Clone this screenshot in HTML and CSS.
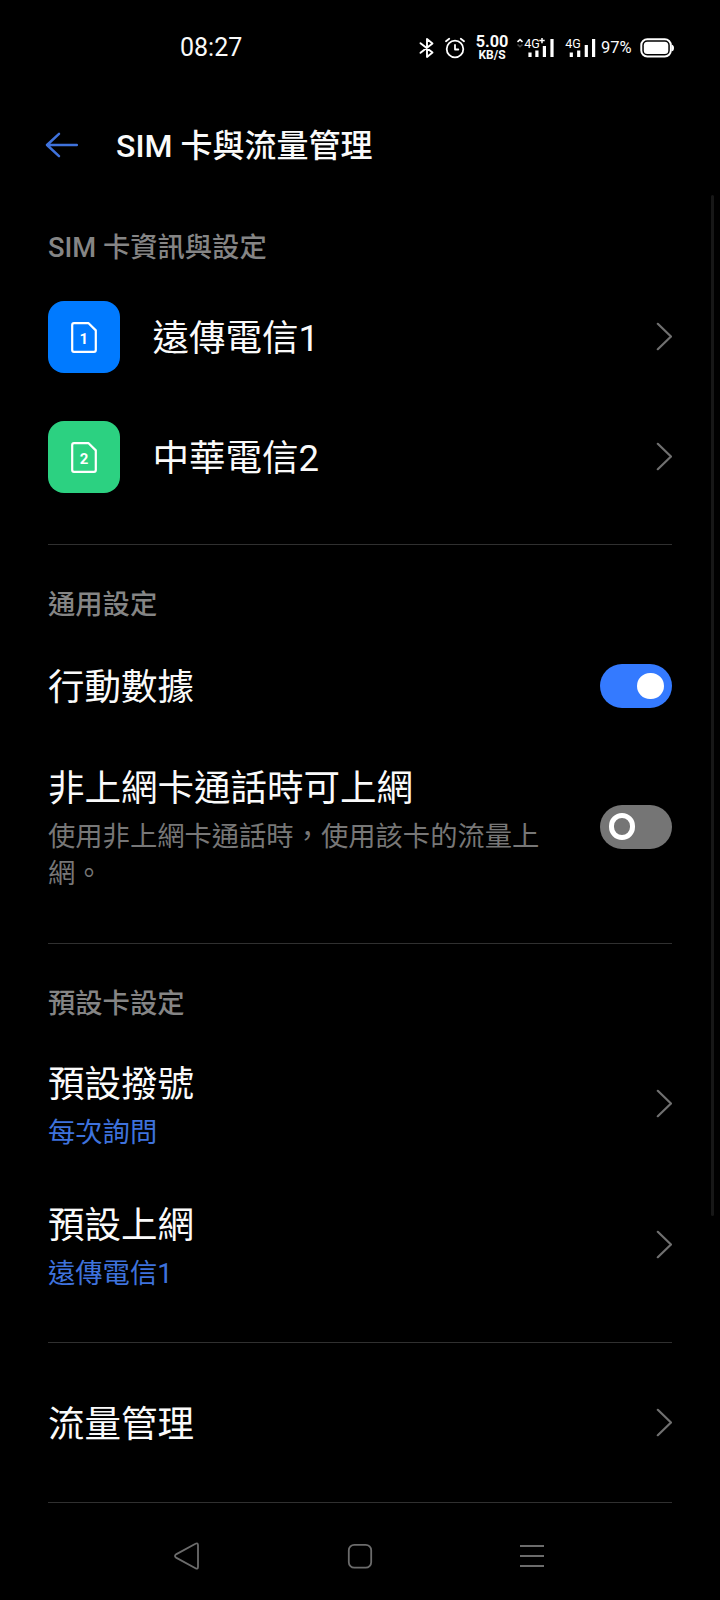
FILE: index.html
```html
<!DOCTYPE html>
<html lang="zh-Hant">
<head>
<meta charset="utf-8">
<title>SIM 卡與流量管理</title>
<link rel="stylesheet" href="styles.css">
</head>
<body>
<svg width="0" height="0" class="defs">
  <symbol id="chevron" viewBox="0 0 18 30"><path d="M3.8 1.8 L17 14.5 L3.8 27.2" fill="none" stroke="#707070" stroke-width="2.2" stroke-linecap="round" stroke-linejoin="round"/></symbol>
</svg>
<div class="screen">
  <header class="status">
    <time class="clock">08:27</time>
    <div class="status-icons">
      <svg class="bt" width="16" height="22" viewBox="0 0 16 22"><path d="M1.5 6.2 L13.5 15.6 L8 20 V2 L13.5 6.4 L1.5 15.8" fill="none" stroke="#fff" stroke-width="1.9" stroke-linejoin="round" stroke-linecap="round"/></svg>
      <svg class="alarm" width="20" height="22" viewBox="0 0 20 22"><g fill="none" stroke="#fff" stroke-width="1.8" stroke-linecap="round" stroke-linejoin="round"><circle cx="10" cy="12" r="8.3"/><path d="M10 8 V12.5 H13.3 M1 4.3 L4.2 1.8 M19 4.3 L15.8 1.8"/></g></svg>
      <div class="speed"><span class="speed-value">5.00</span><span class="speed-unit">KB/S</span></div>
      <svg class="signal-a" width="40" height="22" viewBox="0 0 40 22"><path d="M1.5 4.8 L4 2.6 L6.5 4.8" fill="none" stroke="#fff" stroke-width="1.6"/><path d="M1.5 7.5 L4 9.7 L6.5 7.5" fill="none" stroke="#444" stroke-width="1.6"/><text x="8.3" y="10.9" class="net">4G</text><path d="M23.3 3.6 H28.7 M26 1 V6.3" stroke="#fff" stroke-width="1.5"/><path d="M14 15.5 V20 M20.9 13.5 V20 M28.4 9 V20 M36 2 V20" stroke="#fff" stroke-width="3.2"/></svg>
      <svg class="signal-b" width="31" height="22" viewBox="0 0 31 22"><text x=".3" y="10.9" class="net">4G</text><path d="M6.3 15.5 V20 M13.7 13.5 V20 M21.3 8 V20 M28.6 2 V20" stroke="#fff" stroke-width="3.2"/></svg>
      <span class="percent">97%</span>
      <svg class="battery" width="34" height="20" viewBox="0 0 34 20"><rect x="1.3" y="1.3" width="29.5" height="17.2" rx="6" fill="none" stroke="#fff" stroke-width="2"/><rect x="3.8" y="3.8" width="24.5" height="12.2" rx="3.5" fill="#fff"/><path d="M31.5 6.5 Q34 7 34 10 Q34 13 31.5 13.5Z" fill="#fff"/></svg>
    </div>
  </header>

  <div class="titlebar">
    <svg class="back" width="34" height="26" viewBox="0 0 34 26"><path d="M14 1.8 L2 13 L14 24.2 M2 13 H31.8" fill="none" stroke="#3f72dc" stroke-width="2.5" stroke-linecap="round" stroke-linejoin="round"/></svg>
    <h1 class="title">SIM 卡與流量管理</h1>
  </div>

  <main class="list">
    <section class="group group-sim">
      <h2 class="label">SIM 卡資訊與設定</h2>
      <div class="row row-sim">
        <span class="tile tile-blue"><svg width="26" height="31" viewBox="0 0 26 31"><path d="M3 1.2 H17.6 L24.8 8.4 V28 Q24.8 29.8 23 29.8 H3 Q1.2 29.8 1.2 28 V3 Q1.2 1.2 3 1.2Z" fill="none" stroke="#fff" stroke-width="2.2" stroke-linejoin="round"/><text x="12.7" y="21.8" class="slot">1</text></svg></span>
        <span class="name">遠傳電信1</span>
        <svg class="chevron"><use href="#chevron"/></svg>
      </div>
      <div class="row row-sim">
        <span class="tile tile-green"><svg width="26" height="31" viewBox="0 0 26 31"><path d="M3 1.2 H17.6 L24.8 8.4 V28 Q24.8 29.8 23 29.8 H3 Q1.2 29.8 1.2 28 V3 Q1.2 1.2 3 1.2Z" fill="none" stroke="#fff" stroke-width="2.2" stroke-linejoin="round"/><text x="13" y="21.8" class="slot">2</text></svg></span>
        <span class="name">中華電信2</span>
        <svg class="chevron"><use href="#chevron"/></svg>
      </div>
    </section>

    <section class="group group-general">
      <h2 class="label">通用設定</h2>
      <div class="row row-data">
        <span class="name">行動數據</span>
        <span class="switch on"><i class="knob"></i></span>
      </div>
      <div class="row row-call">
        <div class="text"><span class="name">非上網卡通話時可上網</span><span class="desc">使用非上網卡通話時，使用該卡的流量上網。</span></div>
        <span class="switch"><i class="knob"></i></span>
      </div>
    </section>

    <section class="group group-default">
      <h2 class="label">預設卡設定</h2>
      <div class="row row-double">
        <div class="text"><span class="name">預設撥號</span><span class="value">每次詢問</span></div>
        <svg class="chevron"><use href="#chevron"/></svg>
      </div>
      <div class="row row-double">
        <div class="text"><span class="name">預設上網</span><span class="value">遠傳電信1</span></div>
        <svg class="chevron"><use href="#chevron"/></svg>
      </div>
    </section>

    <section class="group group-traffic">
      <div class="row row-traffic">
        <span class="name">流量管理</span>
        <svg class="chevron"><use href="#chevron"/></svg>
      </div>
    </section>
  </main>

  <nav class="nav">
    <svg width="28" height="30" viewBox="0 0 28 30"><path d="M22.5 2.8 Q25 1.3 25 4.3 V25.7 Q25 28.7 22.5 27.2 L3 16.6 Q1 15 3 13.4Z" fill="none" stroke="#6c6c6c" stroke-width="1.8" stroke-linejoin="round"/></svg>
    <svg width="28" height="30" viewBox="0 0 28 30"><rect x="2.8" y="3.8" width="22.4" height="22.9" rx="5.5" fill="none" stroke="#6c6c6c" stroke-width="1.8"/></svg>
    <svg width="28" height="30" viewBox="0 0 28 30"><path d="M2 5 H26 M2 15 H26 M2 25 H26" stroke="#6c6c6c" stroke-width="1.9"/></svg>
  </nav>
  <div class="scrollbar"></div>
</div>
</body>
</html>
```
FILE: styles.css
```css
* { box-sizing: border-box; }
body {
  margin: 0;
  background: #000;
  color: #fafafa;
  font-family: Roboto, "Noto Sans CJK TC", sans-serif;
}
svg { display: block; flex: none; }
h1, h2 { margin: 0; }
.defs { position: absolute; }
.screen {
  position: relative;
  width: 720px;
  height: 1600px;
  overflow: hidden;
  display: flex;
  flex-direction: column;
}

/* Status bar */
.status {
  height: 96px;
  padding: 0 46px 0 180px;
  display: flex;
  align-items: center;
  justify-content: space-between;
}
.clock { font-size: 25px; line-height: 30px; padding-bottom: 1px; }
.status-icons { display: flex; align-items: center; padding-bottom: 1px; }
.alarm { margin-left: 10px; }
.speed {
  width: 34px;
  margin-left: 10px;
  display: flex;
  flex-direction: column;
  align-items: center;
  font-weight: 700;
}
.speed-value { font-size: 16.3px; line-height: 14px; }
.speed-unit { font-size: 12px; line-height: 12px; }
.signal-a { margin-left: 7px; }
.signal-b { margin-left: 9px; }
.net { font: 12.5px Roboto, sans-serif; fill: #fff; }
.percent { margin-left: 5px; width: 33px; font-size: 16.5px; line-height: 20px; }
.battery { margin-left: 6px; }

/* Title bar */
.titlebar {
  height: 96px;
  padding: 2px 0 0 45px;
  display: flex;
  align-items: center;
}
.title {
  margin-left: 37px;
  padding-top: 1px;
  font-size: 32px;
  line-height: 44px;
  font-weight: 500;
}

/* Settings list */
.list { height: 1311px; }
.group {
  margin: 0 48px;
  border-bottom: 1px solid #303030;
}
.group-sim { height: 353px; padding-top: 35px; }
.group-general { height: 399px; padding-top: 39px; }
.group-default { height: 399px; padding-top: 39px; }
.group-traffic { height: 160px; }
.label {
  height: 40px;
  margin-bottom: 10px;
  color: #858585;
  font-size: 27.3px;
  line-height: 42px;
  font-weight: 500;
}
.row {
  display: flex;
  align-items: center;
  justify-content: space-between;
}
.row-sim { height: 120px; }
.row-data { height: 104px; }
.row-call { height: 177px; }
.row-double { height: 141px; }
.row-traffic { height: 160px; }
.text { width: 500px; display: flex; flex-direction: column; }
.name { font-size: 36.5px; line-height: 52px; padding-top: 4px; }
.text .name { padding-top: 0; }
.row-sim .name { flex: 1; margin-left: 32.5px; }
.desc, .value { font-size: 27.3px; line-height: 37px; }
.desc { color: #777; margin-top: 4px; }
.value { color: #3e72dc; margin-top: 4px; }
.row-call .text { padding-top: 2px; }
.row-double .text { padding-top: 4px; }
.chevron { width: 18px; height: 30px; }

.tile {
  width: 72px;
  height: 72px;
  border-radius: 16px;
  display: grid;
  place-items: center;
}
.tile-blue { background: #007aff; }
.tile-green { background: #2cd181; }
.slot { font: 700 15px Roboto, sans-serif; fill: #fff; text-anchor: middle; }

.switch {
  width: 72px;
  height: 44px;
  padding: 0 8.5px;
  border-radius: 22px;
  background: #757575;
  display: flex;
  align-items: center;
}
.switch.on { background: #347aff; justify-content: flex-end; }
.knob { width: 26.5px; height: 26.5px; border: 5.5px solid #fff; border-radius: 50%; }
.on .knob { background: #fff; }

/* System navigation */
.nav {
  height: 97px;
  padding: 9px 174px 0 173px;
  display: flex;
  align-items: center;
  justify-content: space-between;
}
.scrollbar {
  position: absolute;
  top: 195px;
  right: 6px;
  width: 3px;
  height: 1021px;
  border-radius: 2px;
  background: #171717;
}
```
